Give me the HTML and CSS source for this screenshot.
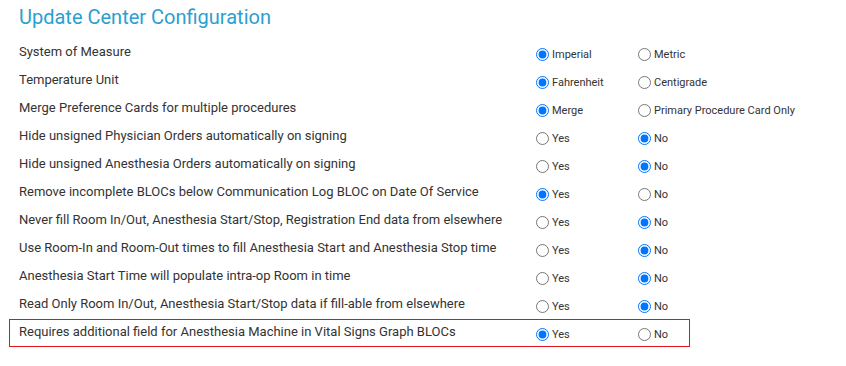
FILE: index.html
```html
<!DOCTYPE html>
<html lang="en">
<head>
  <meta charset="UTF-8">
  <title>Update Center Configuration</title>
  <link rel="stylesheet" href="styles.css">
</head>
<body>
  <div class="config">
    <h1 class="title">Update Center Configuration</h1>

    <div class="row">
      <span class="label">System of Measure</span>
      <label class="option"><input type="radio" name="r1" checked> Imperial</label>
      <label class="option"><input type="radio" name="r1"> Metric</label>
    </div>
    <div class="row">
      <span class="label">Temperature Unit</span>
      <label class="option"><input type="radio" name="r2" checked> Fahrenheit</label>
      <label class="option"><input type="radio" name="r2"> Centigrade</label>
    </div>
    <div class="row">
      <span class="label">Merge Preference Cards for multiple procedures</span>
      <label class="option"><input type="radio" name="r3" checked> Merge</label>
      <label class="option"><input type="radio" name="r3"> Primary Procedure Card Only</label>
    </div>
    <div class="row">
      <span class="label">Hide unsigned Physician Orders automatically on signing</span>
      <label class="option"><input type="radio" name="r4"> Yes</label>
      <label class="option"><input type="radio" name="r4" checked> No</label>
    </div>
    <div class="row">
      <span class="label">Hide unsigned Anesthesia Orders automatically on signing</span>
      <label class="option"><input type="radio" name="r5"> Yes</label>
      <label class="option"><input type="radio" name="r5" checked> No</label>
    </div>
    <div class="row">
      <span class="label">Remove incomplete BLOCs below Communication Log BLOC on Date Of Service</span>
      <label class="option"><input type="radio" name="r6" checked> Yes</label>
      <label class="option"><input type="radio" name="r6"> No</label>
    </div>
    <div class="row">
      <span class="label">Never fill Room In/Out, Anesthesia Start/Stop, Registration End data from elsewhere</span>
      <label class="option"><input type="radio" name="r7"> Yes</label>
      <label class="option"><input type="radio" name="r7" checked> No</label>
    </div>
    <div class="row">
      <span class="label">Use Room-In and Room-Out times to fill Anesthesia Start and Anesthesia Stop time</span>
      <label class="option"><input type="radio" name="r8"> Yes</label>
      <label class="option"><input type="radio" name="r8" checked> No</label>
    </div>
    <div class="row">
      <span class="label">Anesthesia Start Time will populate intra-op Room in time</span>
      <label class="option"><input type="radio" name="r9"> Yes</label>
      <label class="option"><input type="radio" name="r9" checked> No</label>
    </div>
    <div class="row">
      <span class="label">Read Only Room In/Out, Anesthesia Start/Stop data if fill-able from elsewhere</span>
      <label class="option"><input type="radio" name="r10"> Yes</label>
      <label class="option"><input type="radio" name="r10" checked> No</label>
    </div>
    <div class="row highlight">
      <span class="label">Requires additional field for Anesthesia Machine in Vital Signs Graph BLOCs</span>
      <label class="option"><input type="radio" name="r11" checked> Yes</label>
      <label class="option"><input type="radio" name="r11"> No</label>
    </div>
  </div>
</body>
</html>
```

FILE: styles.css
```css
body {
  margin: 0;
  font-family: 'Roboto', 'Liberation Sans', sans-serif;
  color: #333;
  background: #fff;
}
.config {
  padding: 4px 0 0 9px;
}
.title {
  margin: 0 0 9px 10px;
  font-size: 20px;
  font-weight: 400;
  line-height: 26px;
  color: #2a9fd0;
}
.row {
  display: grid;
  grid-template-columns: 517px 102px 1fr;
  align-items: center;
  width: 681px;
  height: 28px;
  box-sizing: border-box;
  padding-left: 9px;
  border: 1px solid transparent;
}
.row.highlight {
  border-color: #e0141e;
}
.label {
  font-size: 13px;
  margin-top: -4px;
  white-space: nowrap;
}
.option {
  display: flex;
  align-items: center;
  font-size: 11px;
  margin-top: 2px;
  white-space: nowrap;
}
.option input {
  margin: 0 3px 0 0;
  width: 13px;
  height: 13px;
}
```
